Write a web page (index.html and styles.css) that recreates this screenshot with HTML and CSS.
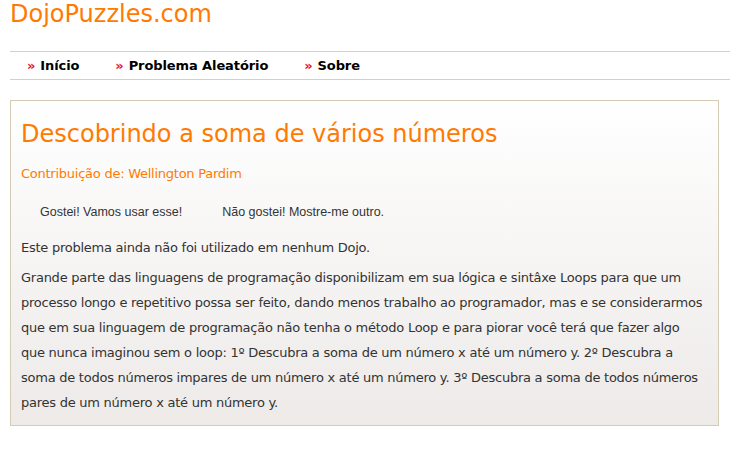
FILE: index.html
```html
<!DOCTYPE html>
<html lang="pt-BR">
<head>
<meta charset="utf-8">
<title>DojoPuzzles.com</title>
<link rel="stylesheet" href="styles.css">
</head>
<body>
<div class="page">
  <header class="header">
    <a class="logo" href="#">DojoPuzzles.com</a>
  </header>
  <nav class="nav">
    <a class="nav-item" href="#"><span class="raquo">»</span>Início</a>
    <a class="nav-item" href="#"><span class="raquo">»</span>Problema Aleatório</a>
    <a class="nav-item" href="#"><span class="raquo">»</span>Sobre</a>
  </nav>
  <main class="box">
    <h1 class="title">Descobrindo a soma de vários números</h1>
    <p class="author">Contribuição de: Wellington Pardim</p>
    <div class="actions">
      <button class="btn">Gostei! Vamos usar esse!</button>
      <button class="btn">Não gostei! Mostre-me outro.</button>
    </div>
    <p class="text">Este problema ainda não foi utilizado em nenhum Dojo.</p>
    <p class="text desc">Grande parte das linguagens de programação disponibilizam em sua lógica e sintâxe Loops para que um processo longo e repetitivo possa ser feito, dando menos trabalho ao programador, mas e se considerarmos que em sua linguagem de programação não tenha o método Loop e para piorar você terá que fazer algo<br>que nunca imaginou sem o loop: 1º Descubra a soma de um número x até um número y. 2º Descubra a<br>soma de todos números impares de um número x até um número y. 3º Descubra a soma de todos números pares de um número x até um número y.</p>
  </main>
</div>
</body>
</html>
```

FILE: styles.css
```css
html, body {
  margin: 0;
  padding: 0;
  background: #ffffff;
}

body {
  font-family: "DejaVu Sans", Verdana, sans-serif;
  color: #333333;
}

.page {
  padding-left: 10px;
}

.header {
  height: 51px;
}

.logo {
  display: block;
  font-size: 24px;
  line-height: 28px;
  color: #ff7a00;
  text-decoration: none;
}

.nav {
  display: flex;
  align-items: center;
  height: 27px;
  border-top: 1px solid #d6cec8;
  border-bottom: 1px solid #d6cec8;
  padding-left: 17px;
  gap: 36px;
}

.nav-item {
  font-size: 13px;
  font-weight: bold;
  letter-spacing: -0.1px;
  color: #000000;
  text-decoration: none;
}

.raquo {
  color: #e8102a;
  margin-right: 5px;
  font-weight: bold;
}

.box {
  margin-top: 20px;
  width: 687px;
  border: 1px solid #d4cbb4;
  padding: 11px 10px 10px 10px;
  background: linear-gradient(#ffffff, #edeae8);
}

.title {
  margin: 0;
  font-weight: normal;
  font-size: 24px;
  line-height: 44px;
  color: #ff7a00;
}

.author {
  margin: 10px 0 0 0;
  font-size: 13px;
  letter-spacing: -0.25px;
  color: #ff7a00;
}

.actions {
  display: flex;
  gap: 40px;
  margin-top: 24px;
  padding-left: 19px;
}

.btn {
  font-family: "Liberation Sans", Arial, sans-serif;
  font-size: 12.5px;
  color: #333333;
  background: none;
  border: none;
  padding: 0;
}

.text {
  font-size: 13px;
  letter-spacing: -0.25px;
  line-height: 25px;
  margin: 16px 0 0 0;
}

.desc {
  margin-top: 5px;
  padding-right: 4px;
}
```
